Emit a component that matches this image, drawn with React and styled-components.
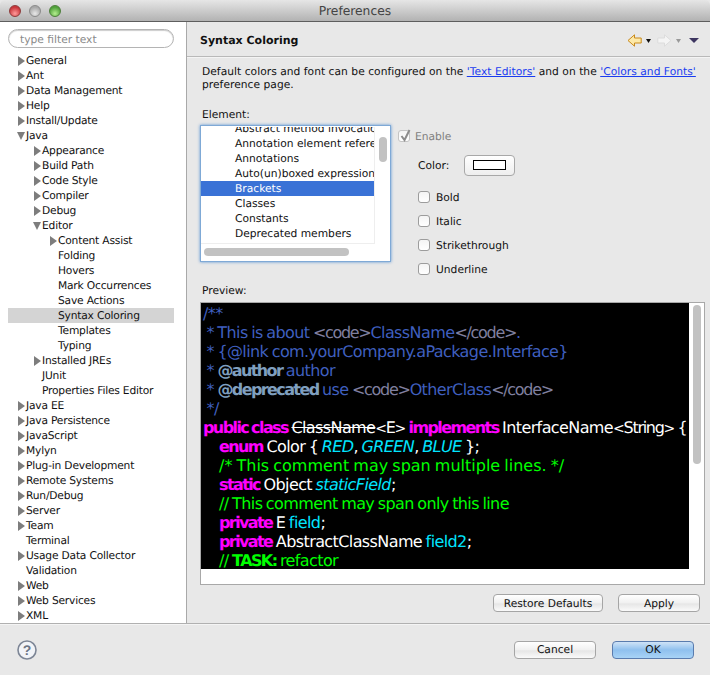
import React from "react";
import styled, { createGlobalStyle } from "styled-components";

const Global = createGlobalStyle`
  html, body { margin: 0; padding: 0; background: #e8e8e8; }
  * { box-sizing: border-box; }
`;

const Window = styled.div`
  width: 710px;
  height: 675px;
  display: flex;
  flex-direction: column;
  overflow: hidden;
  background: #e8e8e8;
  color: #111;
  font-family: "DejaVu Sans", "Liberation Sans", sans-serif;
  font-size: 10.7px;
  text-rendering: geometricPrecision;
`;
const TitleBar = styled.div`
  position: relative;
  height: 22px;
  flex: none;
  display: flex;
  align-items: center;
  justify-content: center;
  border-bottom: 1px solid #5e5e5e;
  border-radius: 5px 5px 0 0;
  background: linear-gradient(#e6e6e6, #b2b2b2);
  color: #444;
  font-size: 12.3px;
`;
const Lights = styled.div`
  position: absolute;
  left: 9px;
  top: 5px;
  display: flex;
  gap: 8px;
`;
const Light = styled.span`
  width: 12px;
  height: 12px;
  border-radius: 50%;
  border: 1px solid ${p => p.$edge};
  background: radial-gradient(circle at 50% 75%, ${p => p.$glow}, ${p => p.$color} 70%);
`;
const Body = styled.div`
  flex: 1;
  display: flex;
  min-height: 0;
`;
const Sidebar = styled.div`
  width: 187px;
  flex: none;
  background: #fff;
  border-right: 1px solid #a9a9a9;
  padding: 7px 0 0 0;
`;
const Filter = styled.div`
  width: 166px;
  height: 19px;
  margin-left: 8px;
  margin-bottom: 5px;
  padding: 1px 0 0 11px;
  border: 1px solid #b4b4b4;
  border-radius: 10px;
  box-shadow: inset 0 1px 1px #ccc;
  color: #8a8a8a;
  font-size: 10.7px;
  line-height: 17px;
`;
const Row = styled.div`
  height: 15px;
  width: 166px;
  margin-left: 8px;
  padding-left: ${p => p.$level * 16 + 9}px;
  display: flex;
  align-items: center;
  white-space: nowrap;
  background: ${p => (p.$selected ? "#d4d4d4" : "transparent")};
  letter-spacing: -0.2px;
`;
const ArrowSlot = styled.span`
  width: 9px;
  flex: none;
  display: flex;
  align-items: center;
`;
const Main = styled.div`
  flex: 1;
  min-width: 0;
  display: flex;
  flex-direction: column;
`;
const Header = styled.div`
  height: 35px;
  flex: none;
  display: flex;
  align-items: center;
  justify-content: space-between;
  padding: 3px 11px 0 13px;
  border-bottom: 1px solid #b9b9b9;
  box-shadow: 0 1px 0 #f4f4f4;
  font-size: 11px;
  font-weight: bold;
`;
const Nav = styled.div`
  display: flex;
  align-items: center;
`;
const NavGroup = styled.div`
  display: flex;
  align-items: center;
  gap: 4px;
  margin-left: ${p => p.$gap || 0}px;
`;
const Content = styled.div`
  flex: 1;
  padding: 8px 5px 0 13px;
  display: flex;
  flex-direction: column;
  min-height: 0;
`;
const Description = styled.div`
  line-height: 13px;
  height: 26px;
  margin-bottom: 17px;
  padding-left: 2px;
  letter-spacing: 0.03px;
  white-space: nowrap;
`;
const Link = styled.a`
  color: #1a3cf0;
  text-decoration: underline;
`;
const FieldLabel = styled.div`
  line-height: 13px;
  height: 13px;
  padding-left: 2px;
`;
const ElementRow = styled.div`
  display: flex;
  height: 159px;
  margin-top: 4px;
`;
const ListBox = styled.div`
  position: relative;
  width: 191px;
  height: 137px;
  flex: none;
  background: #fff;
  border: 1px solid #7fa9d6;
  box-shadow: 0 0 3px #5b93d3;
  overflow: hidden;
`;
const ListRows = styled.div`
  width: 174px;
  height: 117px;
  margin-top: 1px;
  overflow: hidden;
  border-right: 1px solid #eee;
  border-bottom: 1px solid #eee;
`;
const ListInner = styled.div`
  margin-top: -6px;
`;
const ListRow = styled.div`
  height: 15px;
  line-height: 15px;
  padding-left: 34px;
  white-space: nowrap;
  background: ${p => (p.$selected ? "#3a72d6" : "transparent")};
  color: ${p => (p.$selected ? "#fff" : "#111")};
`;
const Thumb = styled.div`
  position: absolute;
  background: #c2c2c2;
  border-radius: 4px;
`;
const VThumb = styled(Thumb)`
  left: 178px;
  top: 11px;
  width: 8px;
  height: 25px;
`;
const HThumb = styled(Thumb)`
  left: 3px;
  top: 122px;
  width: 145px;
  height: 8px;
`;
const Options = styled.div`
  margin-left: 8px;
  display: flex;
  flex-direction: column;
`;
const Check = styled.span`
  width: 12px;
  height: 12px;
  flex: none;
  position: relative;
  border: 1px solid ${p => (p.$disabled ? "#c4c4c4" : "#9c9c9c")};
  border-radius: 3px;
  background: linear-gradient(#f4f4f4, #fff);
`;
const CheckMark = styled.svg`
  position: absolute;
  left: 0;
  top: -3px;
`;
const EnableRow = styled.div`
  display: flex;
  align-items: center;
  gap: 5px;
  height: 14px;
  margin: 4px 0 0 -1px;
  color: #808080;
`;
const ColorRow = styled.div`
  display: flex;
  align-items: center;
  margin: 11px 0 0 19px;
  height: 22px;
`;
const ColorButton = styled.div`
  width: 51px;
  height: 21px;
  margin-left: 15px;
  display: flex;
  align-items: center;
  justify-content: center;
  background: linear-gradient(#fff, #eee);
  border: 1px solid #a8a8a8;
  border-radius: 4px;
`;
const Swatch = styled.span`
  width: 33px;
  height: 10px;
  background: #fff;
  border: 1px solid #000;
`;
const Styles = styled.div`
  display: flex;
  flex-direction: column;
  gap: 10px;
  margin: 14px 0 0 19px;
`;
const StyleRow = styled.label`
  display: flex;
  align-items: center;
  gap: 6px;
  height: 14px;
`;
const Preview = styled.div`
  position: relative;
  width: 505px;
  height: 283px;
  margin-top: 5px;
  background: #fff;
  border: 1px solid #a8a8a8;
  overflow: hidden;
`;
const CodeArea = styled.div`
  width: 488px;
  height: 266px;
  padding: 1px 0 0 2px;
  background: #000;
  color: #fff;
  font-size: 16px;
  letter-spacing: -0.6px;
  word-spacing: -1px;
  overflow: hidden;
  white-space: pre;
`;
const CodeLine = styled.div`
  height: 19px;
  line-height: 19px;
  padding-left: ${p => p.$indent || 0}px;
  letter-spacing: ${p => p.$ls ?? -0.6}px;
`;
const Tok = styled.span`
  color: ${p => p.$c || "#fff"};
  font-weight: ${p => (p.$b ? "bold" : "normal")};
  font-style: ${p => (p.$i ? "italic" : "normal")};
  font-size: ${p => (p.$sm ? "14px" : "inherit")};
  text-decoration: ${p => (p.$s ? "line-through" : "none")};
  letter-spacing: ${p => (p.$b ? "-1.6px" : p.$t ? "-1.3px" : "inherit")};
`;
const CodeThumb = styled(Thumb)`
  left: 492px;
  top: 2px;
  width: 8px;
  height: 159px;
`;
const Actions = styled.div`
  display: flex;
  justify-content: flex-end;
  gap: 15px;
  padding-right: 5px;
  margin-top: 9px;
`;
const Button = styled.div`
  width: ${p => p.$w || 82}px;
  height: 18px;
  display: flex;
  align-items: center;
  justify-content: center;
  border: 1px solid ${p => (p.$primary ? "#5a7cae" : "#a5a5a5")};
  border-radius: 4px;
  color: #111;
  background: ${p => (p.$primary
    ? "linear-gradient(#cfe3f7, #8fc0ee 50%, #a8d3f6)"
    : "linear-gradient(#fff, #f0f0f0 50%, #e6e6e6 55%, #fafafa)")};
`;
const Footer = styled.div`
  height: 52px;
  flex: none;
  display: flex;
  align-items: center;
  justify-content: space-between;
  padding: 0 16px 0 17px;
  border-top: 1px solid #b0b0b0;
  box-shadow: inset 0 1px 0 #f4f4f4;
`;
const FooterButtons = styled.div`
  display: flex;
  gap: 16px;
`;

const tree = [
  [0, "General", "r"], [0, "Ant", "r"], [0, "Data Management", "r"], [0, "Help", "r"],
  [0, "Install/Update", "r"], [0, "Java", "d"], [1, "Appearance", "r"], [1, "Build Path", "r"],
  [1, "Code Style", "r"], [1, "Compiler", "r"], [1, "Debug", "r"], [1, "Editor", "d"],
  [2, "Content Assist", "r"], [2, "Folding"], [2, "Hovers"], [2, "Mark Occurrences"],
  [2, "Save Actions"], [2, "Syntax Coloring", null, true], [2, "Templates"], [2, "Typing"],
  [1, "Installed JREs", "r"], [1, "JUnit"], [1, "Properties Files Editor"], [0, "Java EE", "r"],
  [0, "Java Persistence", "r"], [0, "JavaScript", "r"], [0, "Mylyn", "r"],
  [0, "Plug-in Development", "r"], [0, "Remote Systems", "r"], [0, "Run/Debug", "r"],
  [0, "Server", "r"], [0, "Team", "r"], [0, "Terminal"], [0, "Usage Data Collector", "r"],
  [0, "Validation"], [0, "Web", "r"], [0, "Web Services", "r"], [0, "XML", "r"],
];

const elements = ["Abstract method invocation", "Annotation element reference", "Annotations",
  "Auto(un)boxed expressions", "Brackets", "Classes", "Constants", "Deprecated members"];

const BLUE = "#3f5fbf";
const GREY = "#7f7f9f";
const TAG = "#7f9fbf";
const PINK = "#ff00ff";
const GREEN = "#00ff00";
const CYAN = "#00e5ff";

const TreeArrow = ({ open }) => (
  <svg width="9" height="10" viewBox="0 0 9 10">
    <path d={open ? "M0 1h8L4 9z" : "M1 0l7 5-7 5z"} fill="#7d7d7d" />
  </svg>
);

const NavArrow = ({ flip, fill, stroke }) => (
  <svg width="15" height="13" viewBox="0 0 15 13" transform={flip ? "scale(-1 1)" : undefined}>
    <path d="M1 6.5L7.500 .8v3.200h6.700v5H7.500v3.200z" fill={fill} stroke={stroke} strokeLinejoin="round" />
  </svg>
);

const Caret = ({ color, w = 5 }) => (
  <svg width={w} height={w === 5 ? 4 : 5} viewBox="0 0 5 4" preserveAspectRatio="none">
    <path d="M0 0h5L2.500 4z" fill={color} />
  </svg>
);

export default function App() {
  return (
    <Window>
      <Global />
      <TitleBar>
        <Lights>
          <Light $color="#c8353a" $glow="#ff9a9a" $edge="#8e3a3a" />
          <Light $color="#a8a8a8" $glow="#e8e8e8" $edge="#8a8a8a" />
          <Light $color="#4fa03a" $glow="#b4ee8e" $edge="#4d7f3a" />
        </Lights>
        Preferences
      </TitleBar>
      <Body>
        <Sidebar>
          <Filter>type filter text</Filter>
          {tree.map(([level, name, arrow, selected]) => (
            <Row key={name} $level={level} $selected={selected}>
              <ArrowSlot>{arrow && <TreeArrow open={arrow === "d"} />}</ArrowSlot>
              {name}
            </Row>
          ))}
        </Sidebar>
        <Main>
          <Header>
            Syntax Coloring
            <Nav>
              <NavGroup>
                <NavArrow fill="#fde9a8" stroke="#c98a1c" />
                <Caret color="#111" />
              </NavGroup>
              <NavGroup $gap={6}>
                <NavArrow flip fill="#f4f4f4" stroke="#dcdcdc" />
                <Caret color="#999" />
              </NavGroup>
              <NavGroup $gap={8}>
                <Caret color="#3d3560" w={10} />
              </NavGroup>
            </Nav>
          </Header>
          <Content>
            <Description>
              Default colors and font can be configured on the <Link>'Text Editors'</Link> and on the <Link>'Colors and Fonts'</Link>
              <br />preference page.
            </Description>
            <FieldLabel>Element:</FieldLabel>
            <ElementRow>
              <ListBox>
                <ListRows>
                  <ListInner>
                    {elements.map(e => (
                      <ListRow key={e} $selected={e === "Brackets"}>{e}</ListRow>
                    ))}
                  </ListInner>
                </ListRows>
                <VThumb />
                <HThumb />
              </ListBox>
              <Options>
                <EnableRow>
                  <Check $disabled>
                    <CheckMark width="13" height="14" viewBox="0 0 13 14">
                      <path d="M2.500 8l3 4 5-10" fill="none" stroke="#8c8c8c" strokeWidth="2" />
                    </CheckMark>
                  </Check>
                  Enable
                </EnableRow>
                <ColorRow>
                  Color:
                  <ColorButton><Swatch /></ColorButton>
                </ColorRow>
                <Styles>
                  {["Bold", "Italic", "Strikethrough", "Underline"].map(s => (
                    <StyleRow key={s}><Check />{s}</StyleRow>
                  ))}
                </Styles>
              </Options>
            </ElementRow>
            <FieldLabel>Preview:</FieldLabel>
            <Preview>
              <CodeArea>
                <CodeLine><Tok $c={BLUE}>/**</Tok></CodeLine>
                <CodeLine><Tok $c={BLUE}> * This is about </Tok><Tok $c={GREY} $t>&lt;code&gt;</Tok><Tok $c={BLUE}>ClassName</Tok><Tok $c={GREY} $t>&lt;/code&gt;</Tok><Tok $c={BLUE}>.</Tok></CodeLine>
                <CodeLine><Tok $c={BLUE}> * {"{@link com.yourCompany.aPackage.Interface}"}</Tok></CodeLine>
                <CodeLine><Tok $c={BLUE}> * </Tok><Tok $c={TAG} $b>@author</Tok><Tok $c={BLUE}> author</Tok></CodeLine>
                <CodeLine><Tok $c={BLUE}> * </Tok><Tok $c={TAG} $b>@deprecated</Tok><Tok $c={BLUE}> use </Tok><Tok $c={GREY} $t>&lt;code&gt;</Tok><Tok $c={BLUE}>OtherClass</Tok><Tok $c={GREY} $t>&lt;/code&gt;</Tok></CodeLine>
                <CodeLine><Tok $c={BLUE}> */</Tok></CodeLine>
                <CodeLine><Tok $c={PINK} $b>public class</Tok> <Tok $s>ClassName</Tok><Tok $t $sm>&lt;</Tok><Tok $t>E</Tok><Tok $t $sm>&gt;</Tok> <Tok $c={PINK} $b>implements</Tok> InterfaceName<Tok $t $sm>&lt;</Tok><Tok $t>String</Tok><Tok $t $sm>&gt;</Tok> {"{"}</CodeLine>
                <CodeLine $indent={16}><Tok $c={PINK} $b>enum</Tok> Color {"{"} <Tok $c={CYAN} $i>RED</Tok>, <Tok $c={CYAN} $i>GREEN</Tok>, <Tok $c={CYAN} $i>BLUE</Tok> {"};"}</CodeLine>
                <CodeLine $indent={16} $ls={0}><Tok $c={GREEN}>/* This comment may span multiple lines. */</Tok></CodeLine>
                <CodeLine $indent={16}><Tok $c={PINK} $b>static</Tok> Object <Tok $c={CYAN} $i>staticField</Tok>;</CodeLine>
                <CodeLine $indent={16}><Tok $c={GREEN}>// This comment may span only this line</Tok></CodeLine>
                <CodeLine $indent={16}><Tok $c={PINK} $b>private</Tok> E <Tok $c={CYAN}>field</Tok>;</CodeLine>
                <CodeLine $indent={16}><Tok $c={PINK} $b>private</Tok> AbstractClassName <Tok $c={CYAN}>field2</Tok>;</CodeLine>
                <CodeLine $indent={16}><Tok $c={GREEN}>// </Tok><Tok $c={GREEN} $b>TASK:</Tok><Tok $c={GREEN}> refactor</Tok></CodeLine>
              </CodeArea>
              <CodeThumb />
            </Preview>
            <Actions>
              <Button $w={110}>Restore Defaults</Button>
              <Button>Apply</Button>
            </Actions>
          </Content>
        </Main>
      </Body>
      <Footer>
        <svg width="20" height="20" viewBox="0 0 20 20">
          <circle cx="10" cy="10" r="9" fill="#f2f4f8" stroke="#7d8696" strokeWidth="1.6" />
          <text x="10" y="15" textAnchor="middle" fontSize="14" fontWeight="bold" fontFamily="Liberation Sans" fill="#6d7686">?</text>
        </svg>
        <FooterButtons>
          <Button>Cancel</Button>
          <Button $primary>OK</Button>
        </FooterButtons>
      </Footer>
    </Window>
  );
}
